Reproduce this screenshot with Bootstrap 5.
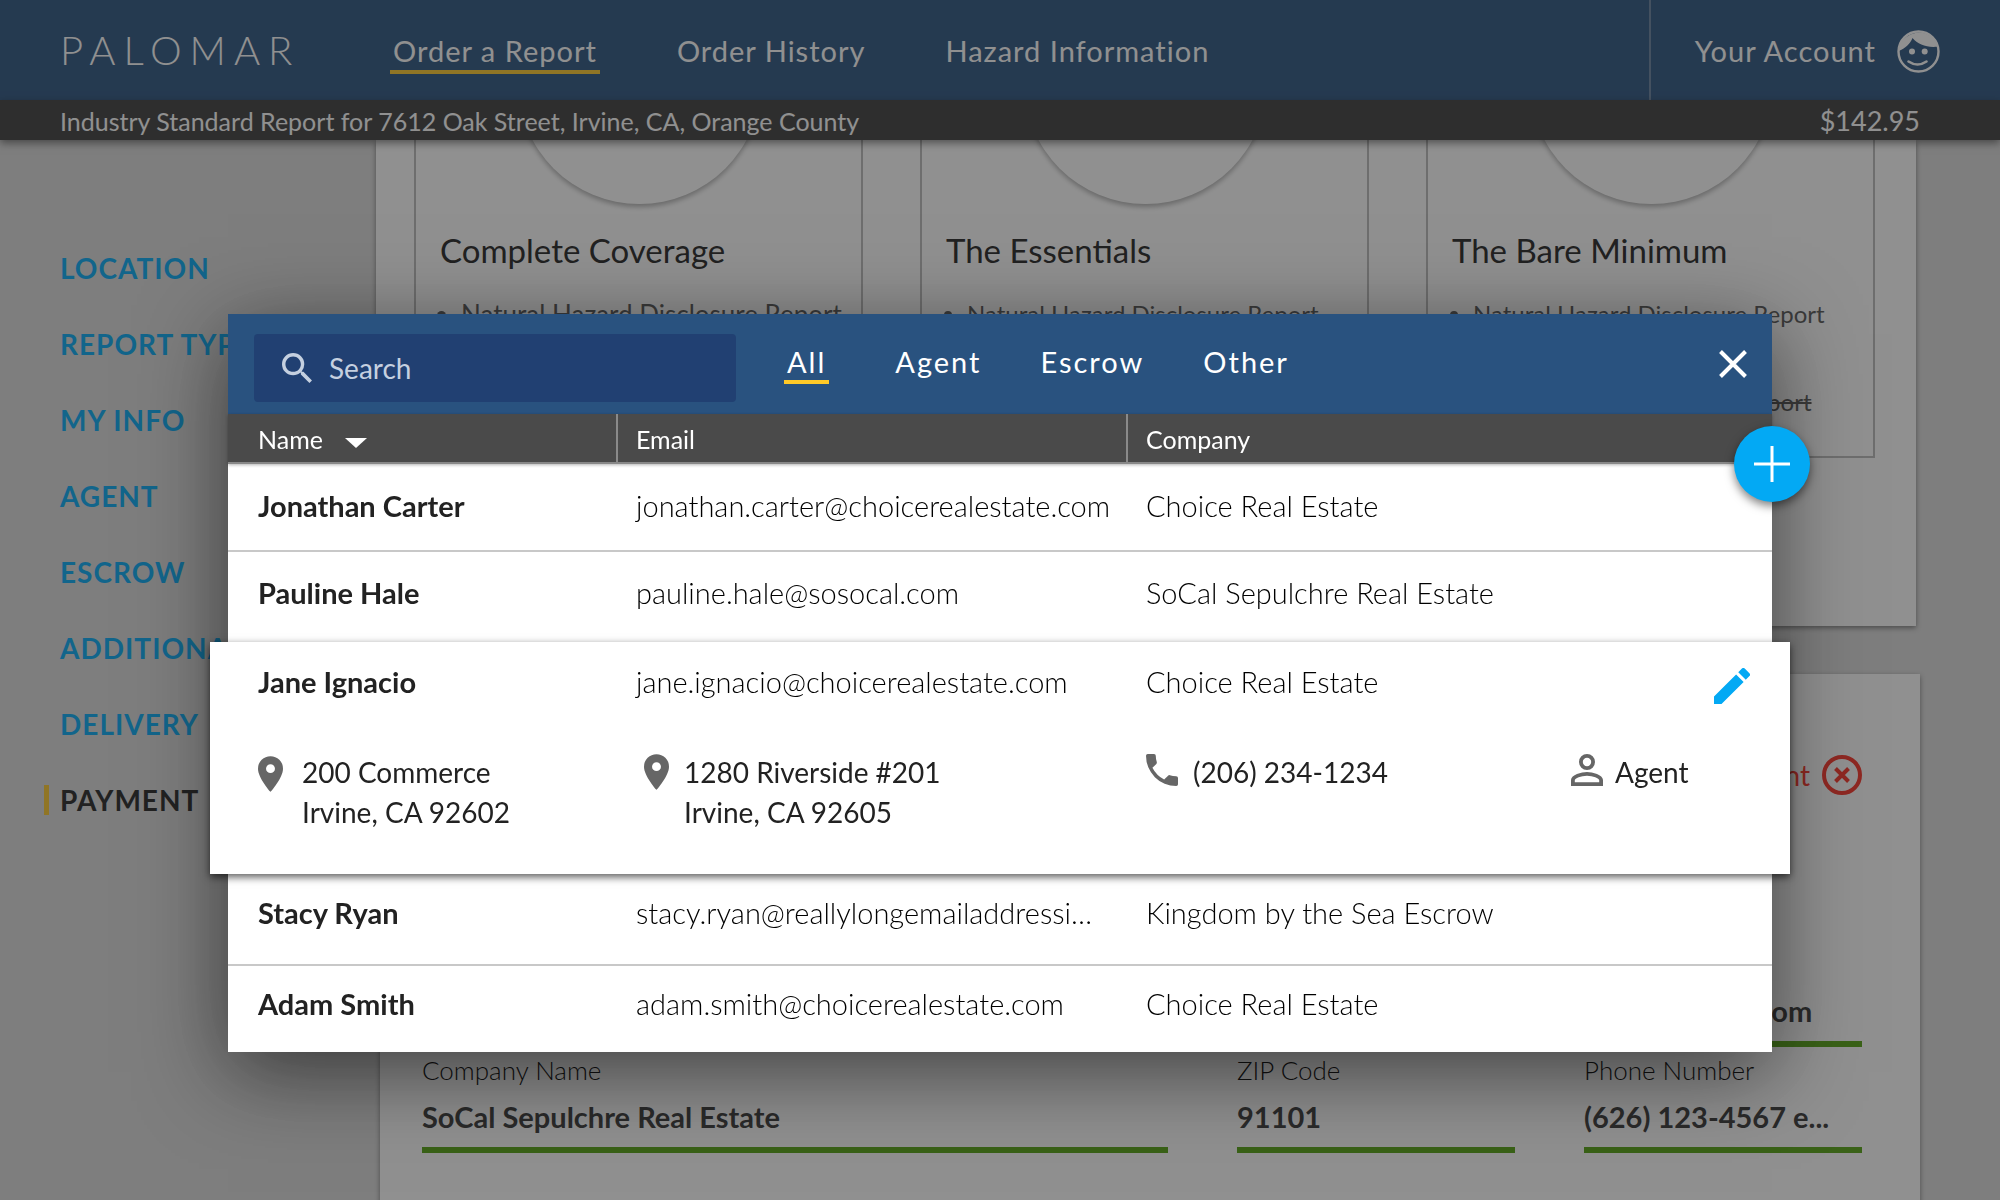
<!DOCTYPE html>
<html lang="en">
<head>
<meta charset="utf-8">
<meta name="viewport" content="width=device-width, initial-scale=1">
<title>Palomar – Order a Report</title>
<link href="https://cdn.jsdelivr.net/npm/bootstrap@5.3.0/dist/css/bootstrap.min.css" rel="stylesheet">
<style>
  :root { --navy: #29527f; --sky: #03a9f4; --sun: #ffc928; --leaf: #52a20e; }
  body { font-family: Lato, "Open Sans", sans-serif; font-size: 28px; line-height: 40px; color: #222; background: #dadada; }
  a, a:hover { text-decoration: none; }

  /* top bar */
  .topbar { background: var(--navy); height: 100px; padding-left: 60px; color: #fff; font-size: 29px; }
  .topbar a { color: #fff; letter-spacing: 1px; }
  .topbar .brand { font-size: 40px; font-weight: 300; letter-spacing: 8px; width: 330px; line-height: 64px; }
  .topnav { gap: 74px; }
  .topnav a { border-bottom: 4px solid transparent; line-height: 38px; padding: 0 3px; margin-top: 6px; }
  .topnav a.current { border-color: var(--sun); }
  .account { border-left: 2px solid #66809f; padding: 2px 60px 0 44px; gap: 21px; }
  .orderbar { background: #3a3a3a; color: #fff; height: 40px; padding: 2px 80px 0 60px; font-size: 25px; position: relative; z-index: 2; box-shadow: 0 3px 8px rgba(0,0,0,.5); }
  .orderbar .total { font-size: 27px; }

  /* steps */
  .steps { width: 376px; padding: 113px 0 0 44px; flex: none; }
  .steps a { display: block; color: var(--sky); font-weight: 700; letter-spacing: 1px; line-height: 30px; margin-bottom: 46px; padding-left: 11px; border-left: 5px solid transparent; white-space: nowrap; }
  .steps a.current { color: #222; border-color: var(--sun); }

  /* sheets */
  .sheets { flex: 1 1 0; margin-right: 84px; min-width: 0; }
  .sheet { background: #fff; box-shadow: 0 2px 5px rgba(0,0,0,.45); }
  .plans { padding: 0 41px 168px 38px; }
  .plan { width: 449px; height: 318px; border: 2px solid #bbb; border-top: 0; padding: 0 24px; white-space: nowrap; }
  .medal { width: 243px; height: 243px; border-radius: 50%; margin: -179px 78px 0; box-shadow: 0 3px 5px rgba(0,0,0,.3); }
  .plan h2 { font-size: 33px; line-height: 40px; font-weight: 400; margin: 26px 0 22px; }
  .plan ul { padding-left: 21px; margin: 0; font-size: 24px; line-height: 44px; color: #555; }
  .plan ul.roomy { font-size: 26px; }
  .details { margin: 48px -4px 0 4px; padding: 71px 58px 60px 42px; }
  .remove { color: #fb3024; background: none; border: 0; padding: 0; height: 60px; gap: 12px; }
  .fieldgrid { display: grid; grid-template-columns: 746fr 278fr 278fr; column-gap: 69px; row-gap: 6px; margin-top: 142px; }
  .fieldgrid label { display: block; font-size: 26px; font-weight: 300; line-height: 34px; color: #000; }
  .fieldgrid input { display: block; width: 100%; height: 66px; border: 0; border-bottom: 6px solid var(--leaf); padding: 0 0 2px; font-size: 29px; font-weight: 700; color: #333; background: none; }

  /* contact picker */
  .picker { background: rgba(34,34,34,.5); overflow: hidden; }
  .picker .modal-dialog { max-width: none; width: 77.2%; margin: 314px auto 0; }
  .picker .modal-content { border: 0; border-radius: 0; color: #222; box-shadow: 0 20px 80px rgba(0,0,0,.55); }
  .pickbar { background: var(--navy); height: 100px; padding: 0 25px 0 26px; }
  .searchbox { background: #214072; border-radius: 4px; width: 482px; height: 68px; margin-top: 8px; padding: 0 28px; gap: 17px; color: #c5d0e0; }
  .searchbox input { background: none; border: 0; padding: 0; color: inherit; outline: 0; min-width: 0; }
  .searchbox input::placeholder { color: inherit; opacity: 1; }
  .tabs { gap: 53px; margin-left: 48px; font-size: 29px; }
  .tabs button { background: none; border: 0; border-bottom: 4px solid transparent; color: #fff; letter-spacing: 2px; line-height: 36px; padding: 0 3px; }
  .tabs button.current { border-color: var(--sun); margin-right: 10px; }
  .plainbtn { background: none; border: 0; padding: 0; display: flex; }
  .addbtn { position: absolute; top: 112px; right: -38px; width: 76px; height: 76px; border: 0; border-radius: 50%; background: var(--sky); padding: 0; z-index: 3; box-shadow: 0 4px 10px rgba(0,0,0,.5); }
  .people, .people thead, .people tbody { display: block; }
  .people tr { display: grid; grid-template-columns: minmax(0,390fr) minmax(0,510fr) minmax(0,644fr); align-items: center; }
  .people thead { background: #4a4a4a; color: #fff; font-size: 25px; border-bottom: 2px solid #888; box-shadow: 0 1px 3px rgba(0,0,0,.3); }
  .people thead th { font-weight: 400; height: 48px; line-height: 48px; padding-left: 18px; border-right: 2px solid #8a8a8a; }
  .people thead th:last-child { border: 0; }
  .people th:first-child, .people td:first-child { padding-left: 30px; }
  .people tbody { font-size: 29px; }
  .people tbody tr { height: 90px; padding-bottom: 8px; }
  .people tbody tr.ruled { height: 88px; padding-bottom: 2px; border-bottom: 2px solid #c8c8c8; }
  .people .rest tr.ruled { height: 92px; padding-bottom: 12px; }
  .people .rest tr.closing { height: 86px; padding-bottom: 10px; }
  .people tbody th { font-weight: 700; }
  .people tbody td { font-weight: 300; padding-left: 18px; color: #000; }
  .people .opened { margin: 0 -18px; padding: 0 18px; background: #fff; position: relative; box-shadow: 0 3px 8px rgba(0,0,0,.65); }
  .people .opened tr { height: 84px; padding-bottom: 4px; }
  .people .opened tr.more { height: 148px; align-items: start; padding: 25px 0 0; font-size: 28px; }
  .people .more td { font-weight: 400; color: #222; }
  .people .more td:nth-child(2) { padding-left: 26px; }
  .people .more svg { margin-top: 2px; flex: none; }
  .spot { gap: 19px; }
  .spot.near { gap: 15px; }
  .spot.phone { flex: 0 0 68%; }
  .spot.tight { gap: 12px; }
  .editbtn { margin: 8px -2px 0 0; }
</style>
</head>
<body>
<div class="vh-100 overflow-hidden d-flex flex-column">
  <header class="topbar d-flex align-items-center flex-shrink-0">
    <a class="brand" href="#">PALOMAR</a>
    <nav class="topnav d-flex" aria-label="Main">
      <a class="current" href="#">Order a Report</a>
      <a href="#">Order History</a>
      <a href="#">Hazard Information</a>
    </nav>
    <a class="account d-flex align-items-center h-100 ms-auto" href="#">Your Account
      <svg width="43" height="43" viewBox="0 0 43 43" fill="#fff" aria-hidden="true"><circle cx="21.500" cy="21.500" r="20" fill="none" stroke="#fff" stroke-width="2.400"/><path d="M1.500 21C8.500 18.500 13 14 15.500 8C21 15 31 18 41.500 16.500A20.600 20.600 0 0 0 1.500 21z"/><circle cx="15" cy="21.500" r="3"/><circle cx="27.700" cy="21.500" r="3"/><path d="M11.500 31.500Q20.500 37.500 29.500 31.500" fill="none" stroke="#fff" stroke-width="2.600" stroke-linecap="round"/></svg>
    </a>
  </header>
  <div class="orderbar d-flex justify-content-between align-items-center flex-shrink-0">
    <span>Industry Standard Report for 7612 Oak Street, Irvine, CA, Orange County</span><span class="total">$142.95</span>
  </div>
  <main class="d-flex flex-grow-1 overflow-hidden">
    <nav class="steps" aria-label="Order steps">
      <a href="#">LOCATION</a>
      <a href="#">REPORT TYPE</a>
      <a href="#">MY INFO</a>
      <a href="#">AGENT</a>
      <a href="#">ESCROW</a>
      <a href="#">ADDITIONAL</a>
      <a href="#">DELIVERY</a>
      <a class="current" href="#">PAYMENT</a>
    </nav>
    <div class="sheets">
      <section class="sheet plans d-flex justify-content-between">
        <article class="plan"><div class="medal"></div><h2>Complete Coverage</h2>
          <ul class="roomy"><li>Natural Hazard Disclosure Report</li></ul></article>
        <article class="plan"><div class="medal"></div><h2>The Essentials</h2>
          <ul><li>Natural Hazard Disclosure Report</li></ul></article>
        <article class="plan"><div class="medal"></div><h2>The Bare Minimum</h2>
          <ul><li>Natural Hazard Disclosure Report</li><li>Tax Report</li><li><s>Environmental Screening Report</s></li></ul></article>
      </section>
      <section class="sheet details">
        <button class="remove d-flex align-items-center ms-auto" type="button">Agent
          <svg width="40" height="40" viewBox="0 0 40 40" fill="none" stroke="currentColor" stroke-width="4" aria-hidden="true"><circle cx="20" cy="20" r="18"/><path d="M13.500 13.500l13 13M26.500 13.500l-13 13" stroke-width="4"/></svg>
        </button>
        <div class="fieldgrid">
          <div><label for="f1">Name</label><input id="f1" value="Pauline Hale"></div>
          <div><label for="f2">License</label><input id="f2" value=""></div>
          <div><label for="f3">Email</label><input id="f3" value="pah@sosocal.com"></div>
          <div><label for="f4">Company Name</label><input id="f4" value="SoCal Sepulchre Real Estate"></div>
          <div><label for="f5">ZIP Code</label><input id="f5" value="91101"></div>
          <div><label for="f6">Phone Number</label><input id="f6" value="(626) 123-4567 e..."></div>
        </div>
      </section>
    </div>
  </main>
</div>

<div class="modal picker d-block" role="dialog" aria-label="Contacts">
  <div class="modal-dialog">
    <div class="modal-content">
      <div class="pickbar d-flex align-items-center">
        <label class="searchbox d-flex align-items-center">
          <svg width="30" height="30" viewBox="3 3 17.500 17.500" fill="currentColor" aria-hidden="true"><path d="M15.500 14h-.79l-.28-.27A6.470 6.470 0 0 0 16 9.500 6.500 6.500 0 1 0 9.500 16c1.610 0 3.090-.59 4.230-1.570l.27.280v.79l5 4.990L20.490 19l-4.990-5zm-6 0C7.010 14 5 11.990 5 9.500S7.010 5 9.500 5 14 7.010 14 9.500 11.990 14 9.500 14z"/></svg>
          <input type="search" placeholder="Search" aria-label="Search">
        </label>
        <div class="tabs d-flex">
          <button class="current" type="button">All</button>
          <button type="button">Agent</button>
          <button type="button">Escrow</button>
          <button type="button">Other</button>
        </div>
        <button class="plainbtn ms-auto" type="button" aria-label="Close">
          <svg width="28" height="28" viewBox="0 0 28 28" stroke="#fff" stroke-width="4" aria-hidden="true"><path d="M1.500 1.500l25 25M26.500 1.500l-25 25"/></svg>
        </button>
      </div>
      <button class="addbtn" type="button" aria-label="Add contact">
        <svg width="36" height="36" viewBox="0 0 36 36" stroke="#fff" stroke-width="3" class="d-block mx-auto" aria-hidden="true"><path d="M18 0v36M0 18h36"/></svg>
      </button>
      <table class="people">
        <thead><tr>
          <th scope="col">Name <svg class="ms-3" width="22" height="10" viewBox="0 0 22 10" fill="#fff" aria-hidden="true"><path d="M0 0h22L11 10z"/></svg></th>
          <th scope="col">Email</th><th scope="col">Company</th>
        </tr></thead>
        <tbody>
          <tr class="ruled"><th scope="row">Jonathan Carter</th><td>jonathan.carter@choicerealestate.com</td><td>Choice Real Estate</td></tr>
          <tr><th scope="row">Pauline Hale</th><td>pauline.hale@sosocal.com</td><td>SoCal Sepulchre Real Estate</td></tr>
        </tbody>
        <tbody class="opened">
          <tr><th scope="row">Jane Ignacio</th><td>jane.ignacio@choicerealestate.com</td>
            <td class="d-flex align-items-center justify-content-between pe-4">Choice Real Estate
              <button class="plainbtn editbtn" type="button" aria-label="Edit Jane Ignacio"><svg width="36" height="36" viewBox="3 3 18 18" fill="#03a9f4" aria-hidden="true"><path d="M3 17.250V21h3.750L17.810 9.940l-3.750-3.750L3 17.250zM20.710 7.040a1 1 0 0 0 0-1.410l-2.340-2.340a1 1 0 0 0-1.410 0l-1.830 1.830 3.750 3.750 1.830-1.830z"/></svg></button></td></tr>
          <tr class="more">
            <td><div class="spot d-flex"><svg class="mt-1" width="25" height="36" viewBox="5 2 14 20" fill="#666" aria-hidden="true"><path d="M12 2a7 7 0 0 0-7 7c0 5.250 7 13 7 13s7-7.750 7-13a7 7 0 0 0-7-7zm0 9.500a2.500 2.500 0 0 1 0-5 2.500 2.500 0 0 1 0 5z"/></svg><span>200 Commerce<br>Irvine, CA 92602</span></div></td>
            <td><div class="spot near d-flex"><svg width="25" height="36" viewBox="5 2 14 20" fill="#666" aria-hidden="true"><path d="M12 2a7 7 0 0 0-7 7c0 5.250 7 13 7 13s7-7.750 7-13a7 7 0 0 0-7-7zm0 9.500a2.500 2.500 0 0 1 0-5 2.500 2.500 0 0 1 0 5z"/></svg><span>1280 Riverside #201<br>Irvine, CA 92605</span></div></td>
            <td class="d-flex"><div class="spot near phone d-flex"><svg width="32" height="32" viewBox="3 3 18 18" fill="#666" aria-hidden="true"><path d="M6.620 10.790a15.050 15.050 0 0 0 6.590 6.590l2.200-2.200a1 1 0 0 1 1.020-.24c1.120.37 2.330.57 3.570.57a1 1 0 0 1 1 1V20a1 1 0 0 1-1 1A17 17 0 0 1 3 4a1 1 0 0 1 1-1h3.500a1 1 0 0 1 1 1c0 1.250.2 2.450.57 3.570a1 1 0 0 1-.25 1.020l-2.200 2.200z"/></svg><span>(206) 234-1234</span></div>
              <div class="spot tight d-flex"><svg width="32" height="32" viewBox="4 4 16 16" fill="#666" aria-hidden="true"><path d="M12 5.900a2.100 2.100 0 1 1 0 4.200 2.100 2.100 0 0 1 0-4.200m0 9c2.970 0 6.100 1.460 6.100 2.100v1.100H5.900V17c0-.64 3.130-2.100 6.100-2.100M12 4a4 4 0 1 0 0 8 4 4 0 0 0 0-8zm0 9c-2.670 0-8 1.340-8 4v3h16v-3c0-2.660-5.330-4-8-4z"/></svg><span>Agent</span></div></td>
          </tr>
        </tbody>
        <tbody class="rest">
          <tr class="ruled"><th scope="row">Stacy Ryan</th><td>stacy.ryan@reallylongemailaddressi…</td><td>Kingdom by the Sea Escrow</td></tr>
          <tr class="closing"><th scope="row">Adam Smith</th><td>adam.smith@choicerealestate.com</td><td>Choice Real Estate</td></tr>
        </tbody>
      </table>
    </div>
  </div>
</div>
<script src="https://cdn.jsdelivr.net/npm/bootstrap@5.3.0/dist/js/bootstrap.bundle.min.js"></script>
</body>
</html>
